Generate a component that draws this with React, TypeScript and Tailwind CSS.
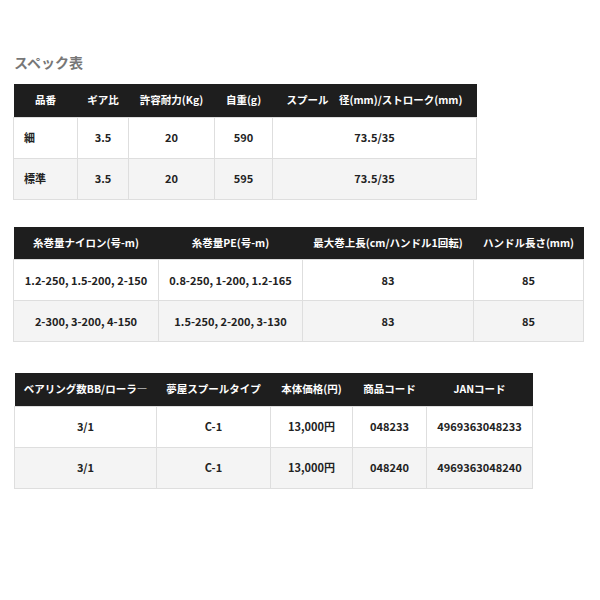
const font = { fontFamily: '"Noto Sans CJK JP", "Noto Sans", sans-serif' };

type Col = { label: string; w: number; left?: boolean };

const SpecTable = ({ cols, rows }: { cols: Col[]; rows: string[][] }) => {
  const total = cols.reduce((a, c) => a + c.w, 0);
  return (
    <table
      className="table-fixed border-collapse"
      style={{ width: total }}
    >
      <colgroup>
        {cols.map((c, i) => (
          <col key={i} style={{ width: c.w }} />
        ))}
      </colgroup>
      <thead>
        <tr className="h-[33px] bg-[#1e1e1e]">
          {cols.map((c, i) => (
            <th
              key={i}
              className="p-0 text-center text-[10.5px] font-bold text-white whitespace-nowrap"
            >
              {c.label}
            </th>
          ))}
        </tr>
      </thead>
      <tbody>
        {rows.map((r, ri) => (
          <tr
            key={ri}
            className={ri % 2 === 0 ? "h-[41px] bg-white" : "h-[41px] bg-[#f4f4f4]"}
          >
            {r.map((v, ci) => (
              <td
                key={ci}
                className={
                  cols[ci].left
                    ? "border border-[#dedede] p-0 pl-[10px] text-left text-[11px] font-bold text-[#222] whitespace-nowrap"
                    : "border border-[#dedede] p-0 text-center text-[11px] font-bold text-[#222] whitespace-nowrap"
                }
              >
                {v}
              </td>
            ))}
          </tr>
        ))}
      </tbody>
    </table>
  );
};

export default function App() {
  return (
    <div className="w-[600px] h-[600px] bg-white" style={font}>
      <div className="pl-[13px] pt-[53px]">
        <h2 className="text-[14px] leading-[18px] font-bold text-[#777] pl-[1px]">
          スペック表
        </h2>
        <div className="mt-[13px]">
          <SpecTable
            cols={[
              { label: "品番", w: 64, left: true },
              { label: "ギア比", w: 51 },
              { label: "許容耐力(Kg)", w: 86 },
              { label: "自重(g)", w: 58 },
              { label: "スプール　径(mm)/ストローク(mm)", w: 204 },
            ]}
            rows={[
              ["細", "3.5", "20", "590", "73.5/35"],
              ["標準", "3.5", "20", "595", "73.5/35"],
            ]}
          />
        </div>
        <div className="mt-[27px]">
          <SpecTable
            cols={[
              { label: "糸巻量ナイロン(号-m)", w: 145 },
              { label: "糸巻量PE(号-m)", w: 144 },
              { label: "最大巻上長(cm/ハンドル1回転)", w: 171 },
              { label: "ハンドル長さ(mm)", w: 110 },
            ]}
            rows={[
              ["1.2-250, 1.5-200, 2-150", "0.8-250, 1-200, 1.2-165", "83", "85"],
              ["2-300, 3-200, 4-150", "1.5-250, 2-200, 3-130", "83", "85"],
            ]}
          />
        </div>
        <div className="mt-[31px] pl-[1px]">
          <SpecTable
            cols={[
              { label: "ベアリング数BB/ローラ―", w: 142 },
              { label: "夢屋スプールタイプ", w: 114 },
              { label: "本体価格(円)", w: 82 },
              { label: "商品コード", w: 74 },
              { label: "JANコード", w: 106 },
            ]}
            rows={[
              ["3/1", "C-1", "13,000円", "048233", "4969363048233"],
              ["3/1", "C-1", "13,000円", "048240", "4969363048240"],
            ]}
          />
        </div>
      </div>
    </div>
  );
}
